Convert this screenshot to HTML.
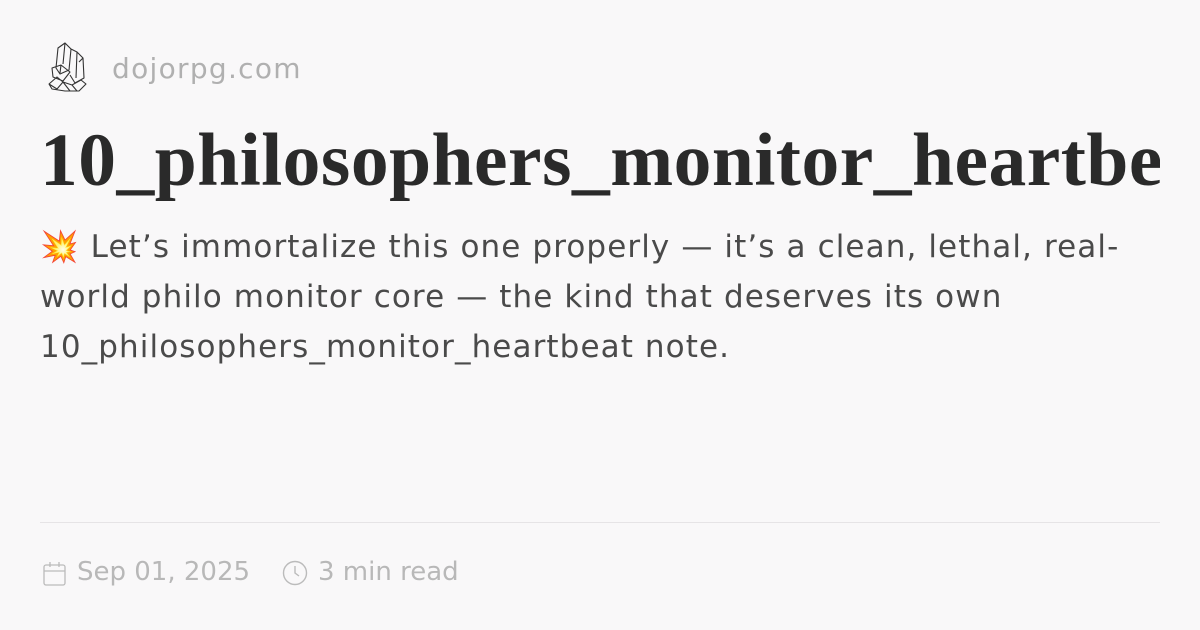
<!DOCTYPE html>
<html><head><meta charset="utf-8"><style>
body{margin:0;width:1200px;height:630px;background:#f9f8f9;overflow:hidden;font-family:"DejaVu Sans","Liberation Sans",sans-serif;position:relative}
.dom{position:absolute;left:112px;top:52px;font-size:28px;color:#b0b0b0;letter-spacing:1.3px}
h1{position:absolute;left:40px;top:118px;margin:0;font-family:"Liberation Serif",serif;font-weight:bold;font-size:75.5px;color:#2a2a2a;white-space:nowrap;width:1120px;overflow:hidden;letter-spacing:0.5px}
.p{position:absolute;left:40px;top:222px;width:1140px;font-size:31px;line-height:50px;color:#4a4a4a;white-space:nowrap;letter-spacing:1.1px}
.hr{position:absolute;left:40px;right:40px;top:522px;border-top:1px solid #e6e4e6}
.meta{position:absolute;top:557px;font-size:26px;color:#b8b8b8}
</style></head><body>
<svg style="position:absolute;left:46px;top:40px" width="44" height="54" viewBox="0 0 44 54" fill="none" stroke="#333" stroke-width="1.1" stroke-linejoin="round"><path d="M12 8L19 3 25 9 23 30 14 34 10 28z M19 3L17 24 M25 9L31 12 37 18 38 38 29 43 24 35 M31 12L30 38 M37 18L33 22 M6 28L15 25 24 32 17 41 7 37z M15 25L14 33 M3 44L11 37 17 42 26 45 35 40 40 44 33 51 19 51 6 49z M11 49L17 42 24 51 M26 45L31 51 M3 44L11 49"/></svg>
<div class="dom">dojorpg.com</div>
<h1>10_philosophers_monitor_heartbeat</h1>
<div class="p">💥 Let’s immortalize this one properly — it’s a clean, lethal, real-<br>world philo monitor core — the kind that deserves its own<br>10_philosophers_monitor_heartbeat note.</div>
<div class="hr"></div>
<svg style="position:absolute;left:43px;top:561px" width="24" height="26" viewBox="0 0 24 26" fill="none" stroke="#bbb" stroke-width="1.3"><rect x="1" y="4" width="21" height="20" rx="2"/><path d="M1 10H22M7 1V6M16 1V6"/></svg>
<div class="meta" style="left:77px">Sep 01, 2025</div>
<svg style="position:absolute;left:282px;top:560px" width="26" height="26" viewBox="0 0 26 26" fill="none" stroke="#bbb" stroke-width="1.4"><circle cx="13" cy="13" r="11.5"/><path d="M13 6V13L17 16"/></svg>
<div class="meta" style="left:318px">3 min read</div>
</body></html>
